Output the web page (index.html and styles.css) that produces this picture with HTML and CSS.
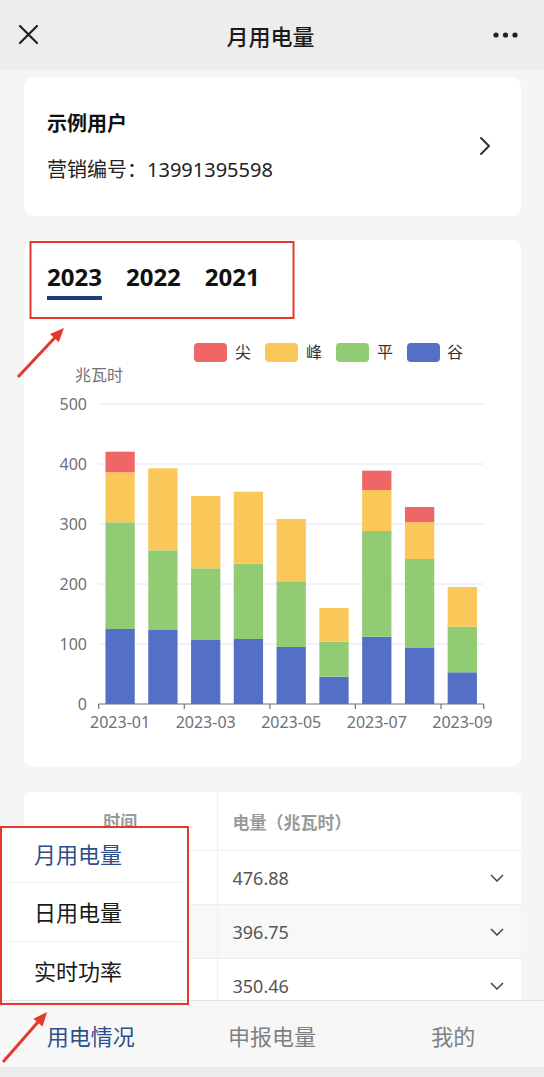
FILE: index.html
```html
<!DOCTYPE html>
<html lang="zh-CN">
<head>
  <meta charset="UTF-8" />
  <meta name="viewport" content="width=device-width, initial-scale=1.0"/>
  <title>月用电量</title>
  <link rel="stylesheet" href="styles.css">
</head>
<body>
  <div class="app">
    <!-- Top bar -->
    <header class="topbar">
      <svg class="icon-close" width="20" height="20" viewBox="0 0 20 20">
        <path d="M2 1 L19 18 M19 1 L2 18" stroke="#222" stroke-width="2.2" fill="none" stroke-linecap="round"/>
      </svg>
      <h1>月用电量</h1>
      <svg class="icon-more" width="26" height="6" viewBox="0 0 26 6">
        <circle cx="3" cy="3" r="2.6" fill="#222"/>
        <circle cx="12.5" cy="3" r="2.6" fill="#222"/>
        <circle cx="22" cy="3" r="2.6" fill="#222"/>
      </svg>
    </header>

    <main class="page">
      <!-- User card -->
      <section class="card user-card">
        <div class="user-info">
          <div class="user-name">示例用户</div>
          <div class="user-no">营销编号：13991395598</div>
        </div>
        <svg class="icon-right" width="12" height="20" viewBox="0 0 12 20">
          <path d="M2 2 L10 10 L2 18" stroke="#333" stroke-width="2" fill="none" stroke-linecap="round" stroke-linejoin="round"/>
        </svg>
      </section>

      <!-- Chart card -->
      <section class="card chart-card">
        <div class="year-tabs">
          <span class="tab active">2023</span>
          <span class="tab">2022</span>
          <span class="tab">2021</span>
        </div>
        <svg class="chart" width="497" height="447" viewBox="0 0 497 447">
          <!-- legend -->
          <rect x="171" y="23" width="33" height="19" rx="4" fill="#ee6666"/>
          <text x="212" y="38" class="legend">尖</text>
          <rect x="242" y="23" width="33" height="19" rx="4" fill="#fac858"/>
          <text x="283" y="38" class="legend">峰</text>
          <rect x="313" y="23" width="33" height="19" rx="4" fill="#91cc75"/>
          <text x="354" y="38" class="legend">平</text>
          <rect x="384" y="23" width="33" height="19" rx="4" fill="#5470c6"/>
          <text x="424" y="38" class="legend">谷</text>

          <text x="52" y="61" class="axis-name">兆瓦时</text>

          <!-- grid -->
          <g stroke="#e0e6f1" stroke-width="1">
            <line x1="75.7" y1="84" x2="460.7" y2="84"/>
            <line x1="75.7" y1="144" x2="460.7" y2="144"/>
            <line x1="75.7" y1="204" x2="460.7" y2="204"/>
            <line x1="75.7" y1="264" x2="460.7" y2="264"/>
            <line x1="75.7" y1="324" x2="460.7" y2="324"/>
          </g>
          <g class="y-label">
            <text x="64" y="90">500</text>
            <text x="64" y="150">400</text>
            <text x="64" y="210">300</text>
            <text x="64" y="270">200</text>
            <text x="64" y="330">100</text>
            <text x="64" y="390">0</text>
          </g>

          <!-- bars: 谷 / 平 / 峰 / 尖 -->
          <g>
            <rect x="82.45" y="309" width="29.3" height="75" fill="#5470c6"/>
            <rect x="82.45" y="202.3" width="29.3" height="106.7" fill="#91cc75"/>
            <rect x="82.45" y="152.3" width="29.3" height="50" fill="#fac858"/>
            <rect x="82.45" y="131.7" width="29.3" height="20.6" fill="#ee6666"/>

            <rect x="125.25" y="310" width="29.3" height="74" fill="#5470c6"/>
            <rect x="125.25" y="230.3" width="29.3" height="79.7" fill="#91cc75"/>
            <rect x="125.25" y="148.3" width="29.3" height="82" fill="#fac858"/>

            <rect x="168.05" y="320" width="29.3" height="64" fill="#5470c6"/>
            <rect x="168.05" y="248.3" width="29.3" height="71.7" fill="#91cc75"/>
            <rect x="168.05" y="176" width="29.3" height="72.3" fill="#fac858"/>

            <rect x="210.75" y="319" width="29.3" height="65" fill="#5470c6"/>
            <rect x="210.75" y="243.7" width="29.3" height="75.3" fill="#91cc75"/>
            <rect x="210.75" y="171.7" width="29.3" height="72" fill="#fac858"/>

            <rect x="253.55" y="327" width="29.3" height="57" fill="#5470c6"/>
            <rect x="253.55" y="262" width="29.3" height="65" fill="#91cc75"/>
            <rect x="253.55" y="199" width="29.3" height="63" fill="#fac858"/>

            <rect x="296.35" y="356.7" width="29.3" height="27.3" fill="#5470c6"/>
            <rect x="296.35" y="321.7" width="29.3" height="35" fill="#91cc75"/>
            <rect x="296.35" y="288" width="29.3" height="33.7" fill="#fac858"/>

            <rect x="339.15" y="316.7" width="29.3" height="67.3" fill="#5470c6"/>
            <rect x="339.15" y="211" width="29.3" height="105.7" fill="#91cc75"/>
            <rect x="339.15" y="170" width="29.3" height="41" fill="#fac858"/>
            <rect x="339.15" y="150.7" width="29.3" height="19.3" fill="#ee6666"/>

            <rect x="381.95" y="328" width="29.3" height="56" fill="#5470c6"/>
            <rect x="381.95" y="239" width="29.3" height="89" fill="#91cc75"/>
            <rect x="381.95" y="202.3" width="29.3" height="36.7" fill="#fac858"/>
            <rect x="381.95" y="187" width="29.3" height="15.3" fill="#ee6666"/>

            <rect x="424.65" y="352.3" width="29.3" height="31.7" fill="#5470c6"/>
            <rect x="424.65" y="306.7" width="29.3" height="45.6" fill="#91cc75"/>
            <rect x="424.65" y="267" width="29.3" height="39.7" fill="#fac858"/>
          </g>

          <!-- x axis -->
          <g stroke="#6e7079" stroke-width="1.2">
            <line x1="75.7" y1="384" x2="460.7" y2="384"/>
            <line x1="75.7" y1="384" x2="75.7" y2="389"/>
            <line x1="161.3" y1="384" x2="161.3" y2="389"/>
            <line x1="246.9" y1="384" x2="246.9" y2="389"/>
            <line x1="332.4" y1="384" x2="332.4" y2="389"/>
            <line x1="418" y1="384" x2="418" y2="389"/>
            <line x1="460.7" y1="384" x2="460.7" y2="389"/>
          </g>
          <g class="x-label">
            <text x="97.1" y="408">2023-01</text>
            <text x="182.7" y="408">2023-03</text>
            <text x="268.2" y="408">2023-05</text>
            <text x="353.8" y="408">2023-07</text>
            <text x="439.3" y="408">2023-09</text>
          </g>
        </svg>
      </section>

      <!-- Table card -->
      <section class="card table-card">
        <table class="usage-table">
          <thead>
            <tr>
              <th class="col-time">时间</th>
              <th class="col-value">电量（兆瓦时）</th>
            </tr>
          </thead>
          <tbody>
            <tr>
              <td class="col-time"></td>
              <td class="col-value"><span>476.88</span><svg class="icon-down" width="14" height="8" viewBox="0 0 14 8"><path d="M1 1 L7 7 L13 1" stroke="#444" stroke-width="1.5" fill="none"/></svg></td>
            </tr>
            <tr class="odd">
              <td class="col-time"></td>
              <td class="col-value"><span>396.75</span><svg class="icon-down" width="14" height="8" viewBox="0 0 14 8"><path d="M1 1 L7 7 L13 1" stroke="#444" stroke-width="1.5" fill="none"/></svg></td>
            </tr>
            <tr>
              <td class="col-time"></td>
              <td class="col-value"><span>350.46</span><svg class="icon-down" width="14" height="8" viewBox="0 0 14 8"><path d="M1 1 L7 7 L13 1" stroke="#444" stroke-width="1.5" fill="none"/></svg></td>
            </tr>
          </tbody>
        </table>
      </section>
    </main>

    <!-- Bottom tab bar -->
    <div class="tabbar-wrap">
      <nav class="tabbar">
        <span class="active">用电情况</span>
        <span>申报电量</span>
        <span>我的</span>
      </nav>
      <div class="safe-area"></div>
    </div>

    <!-- Popup menu above the tab bar -->
    <ul class="menu-popup">
      <li class="active">月用电量</li>
      <li>日用电量</li>
      <li>实时功率</li>
    </ul>

    <!-- Annotation marks -->
    <svg class="marks" width="544" height="1077" viewBox="0 0 544 1077">
      <rect x="30.5" y="242" width="263" height="76" fill="none" stroke="#e4392b" stroke-width="2"/>
      <rect x="1" y="827" width="187" height="177" fill="none" stroke="#e4392b" stroke-width="2"/>
      <line x1="18" y1="377" x2="55" y2="337.5" stroke="#e4392b" stroke-width="3"/>
      <polygon points="64,328 58.8,342.3 50,334.1" fill="#e4392b"/>
      <line x1="3" y1="1062" x2="38" y2="1022" stroke="#e4392b" stroke-width="3"/>
      <polygon points="47,1012 42.6,1026.6 33.4,1018.8" fill="#e4392b"/>
    </svg>
  </div>
</body>
</html>
```

FILE: styles.css
```css
* {
  box-sizing: border-box;
  font-family: "Noto Sans", "Noto Sans CJK SC", sans-serif;
}

body {
  margin: 0;
  background: #f5f5f5;
}

.app {
  position: relative;
  width: 544px;
  height: 1077px;
  overflow: hidden;
  background: #f5f5f5;
}

/* Top bar */
.topbar {
  height: 70px;
  background: #ededed;
  display: flex;
  align-items: center;
  justify-content: space-between;
  padding: 0 25px 0 18px;
}

.topbar h1 {
  margin: 0;
  font-size: 22px;
  font-weight: 500;
  color: #1a1a1a;
  padding-left: 10px;
}

/* Page */
.page {
  padding: 7px 23px 0 24px;
}

.card {
  background: #fff;
  border-radius: 10px;
  margin-bottom: 24px;
}

.user-card {
  height: 139px;
  display: flex;
  align-items: center;
  justify-content: space-between;
  padding: 0 30px 0 23px;
}

.user-name {
  font-size: 20px;
  font-weight: 700;
  color: #111;
  line-height: 28px;
}

.user-no {
  margin-top: 18px;
  font-size: 20px;
  color: #222;
  line-height: 28px;
}

.icon-right {
  margin-top: -2px;
}

/* Chart */
.chart-card {
  height: 527px;
  padding-top: 20px;
  margin-bottom: 25px;
}

.year-tabs {
  display: flex;
  gap: 24px;
  padding-left: 23px;
}

.tab {
  font-size: 24px;
  font-weight: 700;
  color: #111;
  line-height: 33px;
  padding-bottom: 3px;
  border-bottom: 4px solid transparent;
}

.tab.active {
  border-bottom-color: #1e3f7e;
}

.chart {
  display: block;
  margin-top: 20px;
  margin-left: -1px;
}

.chart .legend {
  font-size: 16px;
  fill: #333;
}

.chart .axis-name {
  font-size: 16px;
  fill: #6e7079;
}

.chart .y-label text {
  font-size: 16px;
  fill: #6e7079;
  text-anchor: end;
}

.chart .x-label text {
  font-size: 16px;
  fill: #6e7079;
  text-anchor: middle;
}

/* Table */
.table-card {
  border-radius: 6px;
  overflow: hidden;
}

.usage-table {
  width: 100%;
  border-collapse: collapse;
}

.usage-table th {
  height: 58px;
  font-size: 17px;
  font-weight: 600;
  color: #9a9a9a;
  text-align: left;
}

.usage-table td {
  height: 54px;
  border-top: 1px solid #eee;
}

.usage-table .col-time {
  width: 193px;
  text-align: center;
  border-right: 1px solid #eee;
}

.usage-table .col-value {
  padding: 0 17px 0 15px;
}

.usage-table td.col-value {
  display: flex;
  align-items: center;
  justify-content: space-between;
  font-size: 18px;
  color: #555;
}

.usage-table tr.odd td {
  background: #f8f8f8;
}

/* Popup menu */
.menu-popup {
  position: absolute;
  left: 2px;
  top: 828px;
  width: 185px;
  height: 172px;
  margin: 0;
  padding: 0;
  list-style: none;
  background: #fff;
}

.menu-popup li {
  height: 59px;
  margin: 0 4px 0 5px;
  padding: 0 0 3px 27px;
  display: flex;
  align-items: center;
  font-size: 22px;
  color: #1a1a1a;
  border-bottom: 1px solid #eee;
}

.menu-popup li:first-child {
  height: 55px;
  padding-bottom: 5px;
}

.menu-popup li:last-child {
  height: 58px;
  border-bottom: none;
}

.menu-popup li.active {
  color: #2d4f8a;
}

/* Bottom tab bar */
.tabbar-wrap {
  position: absolute;
  left: 0;
  right: 0;
  bottom: 0;
}

.tabbar {
  height: 67px;
  background: #f7f7f7;
  border-top: 1px solid #e2e2e2;
  display: grid;
  grid-template-columns: repeat(3, 1fr);
  align-items: center;
  text-align: center;
}

.tabbar span {
  font-size: 22px;
  color: #808080;
  padding-top: 1px;
}

.tabbar span.active {
  color: #2d4f8a;
}

.safe-area {
  height: 10px;
  background: #ececec;
}

.marks {
  position: absolute;
  left: 0;
  top: 0;
  pointer-events: none;
}
```
